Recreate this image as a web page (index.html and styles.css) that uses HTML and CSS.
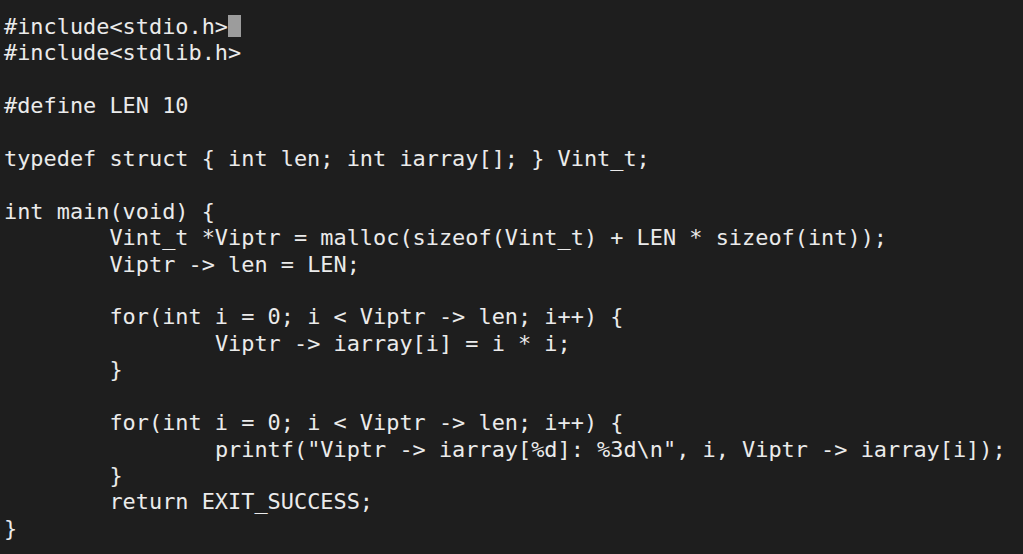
FILE: index.html
```html
<!DOCTYPE html>
<html lang="en">
<head>
<meta charset="utf-8">
<title>Terminal</title>
<link rel="stylesheet" href="styles.css">
</head>
<body>
<main class="terminal">
<pre class="code">#include&lt;stdio.h&gt;<span class="cursor"></span>
#include&lt;stdlib.h&gt;

#define LEN 10

typedef struct { int len; int iarray[]; } Vint_t;

int main(void) {
	Vint_t *Viptr = malloc(sizeof(Vint_t) + LEN * sizeof(int));
	Viptr -&gt; len = LEN;

	for(int i = 0; i &lt; Viptr -&gt; len; i++) {
		Viptr -&gt; iarray[i] = i * i;
	}

	for(int i = 0; i &lt; Viptr -&gt; len; i++) {
		printf("Viptr -&gt; iarray[%d]: %3d\n", i, Viptr -&gt; iarray[i]);
	}
	return EXIT_SUCCESS;
}</pre>
</main>
</body>
</html>
```
FILE: styles.css
```css
html, body {
  margin: 0;
  padding: 0;
  background: #1e1e1e;
  height: 100%;
  overflow: hidden;
}

.terminal {
  padding: 14px 0 0 4px;
}

.code {
  margin: 0;
  font-family: "DejaVu Sans Mono", "Liberation Mono", monospace;
  font-size: 21.9px;
  line-height: 26.4px;
  color: #ebebeb;
  white-space: pre;
  tab-size: 8;
  -moz-tab-size: 8;
}

.cursor {
  display: inline-block;
  width: 13px;
  height: 22px;
  margin-left: 0;
  background: #9c9c9c;
  vertical-align: -3px;
}
```
